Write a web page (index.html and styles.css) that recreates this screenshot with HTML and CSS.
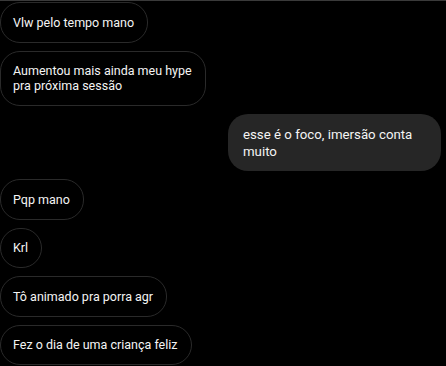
FILE: index.html
```html
<!DOCTYPE html>
<html lang="pt-BR">
<head>
<meta charset="utf-8">
<link rel="stylesheet" href="styles.css">
</head>
<body>
<div class="chat">
  <div class="msg in">Vlw pelo tempo mano</div>
  <div class="msg in">Aumentou mais ainda meu hype<br>pra próxima sessão</div>
  <div class="msg out">esse é o foco, imersão conta<br>muito</div>
  <div class="msg in">Pqp mano</div>
  <div class="msg in">Krl</div>
  <div class="msg in">Tô animado pra porra agr</div>
  <div class="msg in">Fez o dia de uma criança feliz</div>
</div>
</body>
</html>
```
FILE: styles.css
```css
html, body {
  margin: 0;
  padding: 0;
  background: #000;
  height: 100%;
  overflow: hidden;
}
body {
  border-top: 1px solid #3a3a3a;
  box-sizing: border-box;
  font-family: Roboto, "Noto Sans", sans-serif;
  font-size: 12.5px;
  color: #f4f4f4;
}
.chat {
  display: flex;
  flex-direction: column;
  align-items: flex-start;
  gap: 8px;
  padding: 1px 5px 0 0;
}
.msg {
  line-height: 15px;
  padding: 11.75px 13px 11.75px 12px;
  border-radius: 20px;
  box-sizing: border-box;
}
.in {
  border: 1px solid #2a2a2a;
  background: #000;
}
.out {
  align-self: flex-end;
  width: 213px;
  background: #262626;
  font-size: 13.25px;
  line-height: 17px;
  padding: 11.5px 15px;
  border-radius: 20px;
}
```
